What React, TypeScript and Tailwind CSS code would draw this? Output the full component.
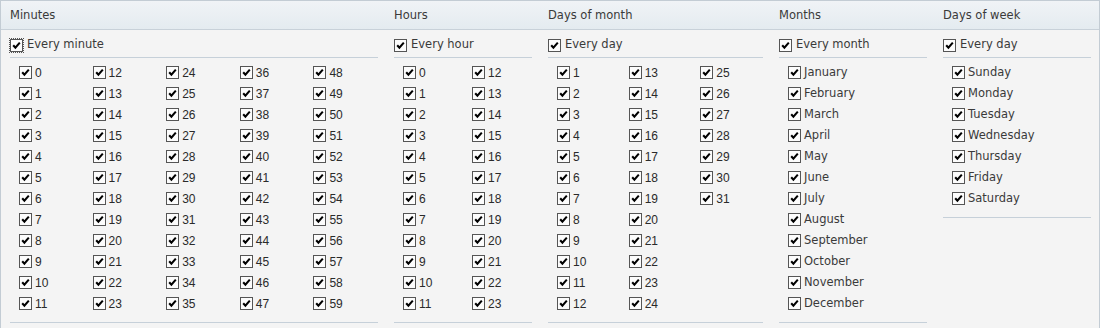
const range = (from: number, to: number) =>
  Array.from({ length: to - from + 1 }, (_, i) => String(from + i));

const chunk = (items: string[], size: number) => {
  const out: string[][] = [];
  for (let i = 0; i < items.length; i += size) out.push(items.slice(i, i + size));
  return out;
};

type Section = {
  title: string;
  every: string;
  width: string;
  columns: string[][];
  numeric: boolean;
};

const sections: Section[] = [
  { title: "Minutes", every: "Every minute", width: "w-[368px]", columns: chunk(range(0, 59), 12), numeric: true },
  { title: "Hours", every: "Every hour", width: "w-[138px]", columns: chunk(range(0, 23), 12), numeric: true },
  { title: "Days of month", every: "Every day", width: "w-[215px]", columns: chunk(range(1, 31), 12), numeric: true },
  {
    title: "Months",
    every: "Every month",
    width: "w-[148px]",
    columns: [
      ["January", "February", "March", "April", "May", "June", "July", "August", "September", "October", "November", "December"],
    ],
    numeric: false,
  },
  {
    title: "Days of week",
    every: "Every day",
    width: "w-[148px]",
    columns: [["Sunday", "Monday", "Tuesday", "Wednesday", "Thursday", "Friday", "Saturday"]],
    numeric: false,
  },
];

function CheckBox({ focused = false }: { focused?: boolean }) {
  return (
    <span className={`flex shrink-0 ${focused ? "outline-1 outline-offset-0 outline-dotted outline-[#555]" : ""}`}>
      <svg width="13" height="13" viewBox="0 0 13 13">
        <rect x="0.5" y="0.5" width="12" height="12" fill="#fcfcfc" stroke="#555" />
        <path d="M3.2 6.2 L5.4 8.6 L9.8 3.6" fill="none" stroke="#000" strokeWidth="2.1" />
      </svg>
    </span>
  );
}

function Column({ section, first }: { section: Section; first: boolean }) {
  const labelFont = section.numeric
    ? "font-[family-name:Liberation_Sans,Arial,sans-serif] text-[12px] text-[#2a2a2a]"
    : "font-[family-name:DejaVu_Sans,sans-serif] text-[11.5px] text-[#3a3a3a]";
  return (
    <div className={`${section.width} shrink-0 flex flex-col`}>
      <label className="mt-[4px] flex h-[21px] items-center gap-[4px] pt-px font-[family-name:DejaVu_Sans,sans-serif] text-[11.5px] text-[#3a3a3a]">
        <CheckBox focused={first} />
        {section.every}
      </label>
      <div className="mt-[2px] border-t border-[#c6d0d9]" />
      <div className="flex pt-[4px]">
        {section.columns.map((col, i) => (
          <div key={i} className="flex flex-1 flex-col">
            {col.map((item) => (
              <label
                key={item}
                className={`flex h-[21px] items-center gap-[3px] pl-[9px] ${labelFont}`}
              >
                <CheckBox />
                {item}
              </label>
            ))}
          </div>
        ))}
      </div>
      <div className="mt-[8px] border-t border-[#c6d0d9]" />
    </div>
  );
}

export default function App() {
  return (
    <div className="h-[328px] w-[1100px] overflow-hidden border-x border-t border-[#c3ccd4] bg-[#f4f4f4]">
      <div className="flex h-[29px] items-center gap-4 border-b border-[#c8d1d9] bg-gradient-to-b from-[#f0f3f6] to-[#e4ebf0] pl-[9px] pt-px">
        {sections.map((s) => (
          <div
            key={s.title}
            className={`${s.width} shrink-0 font-[family-name:DejaVu_Sans,sans-serif] text-[11.5px] text-[#3a3a3a]`}
          >
            {s.title}
          </div>
        ))}
      </div>
      <div className="flex items-start gap-4 pl-[9px]">
        {sections.map((s, i) => (
          <Column key={s.title} section={s} first={i === 0} />
        ))}
      </div>
    </div>
  );
}
